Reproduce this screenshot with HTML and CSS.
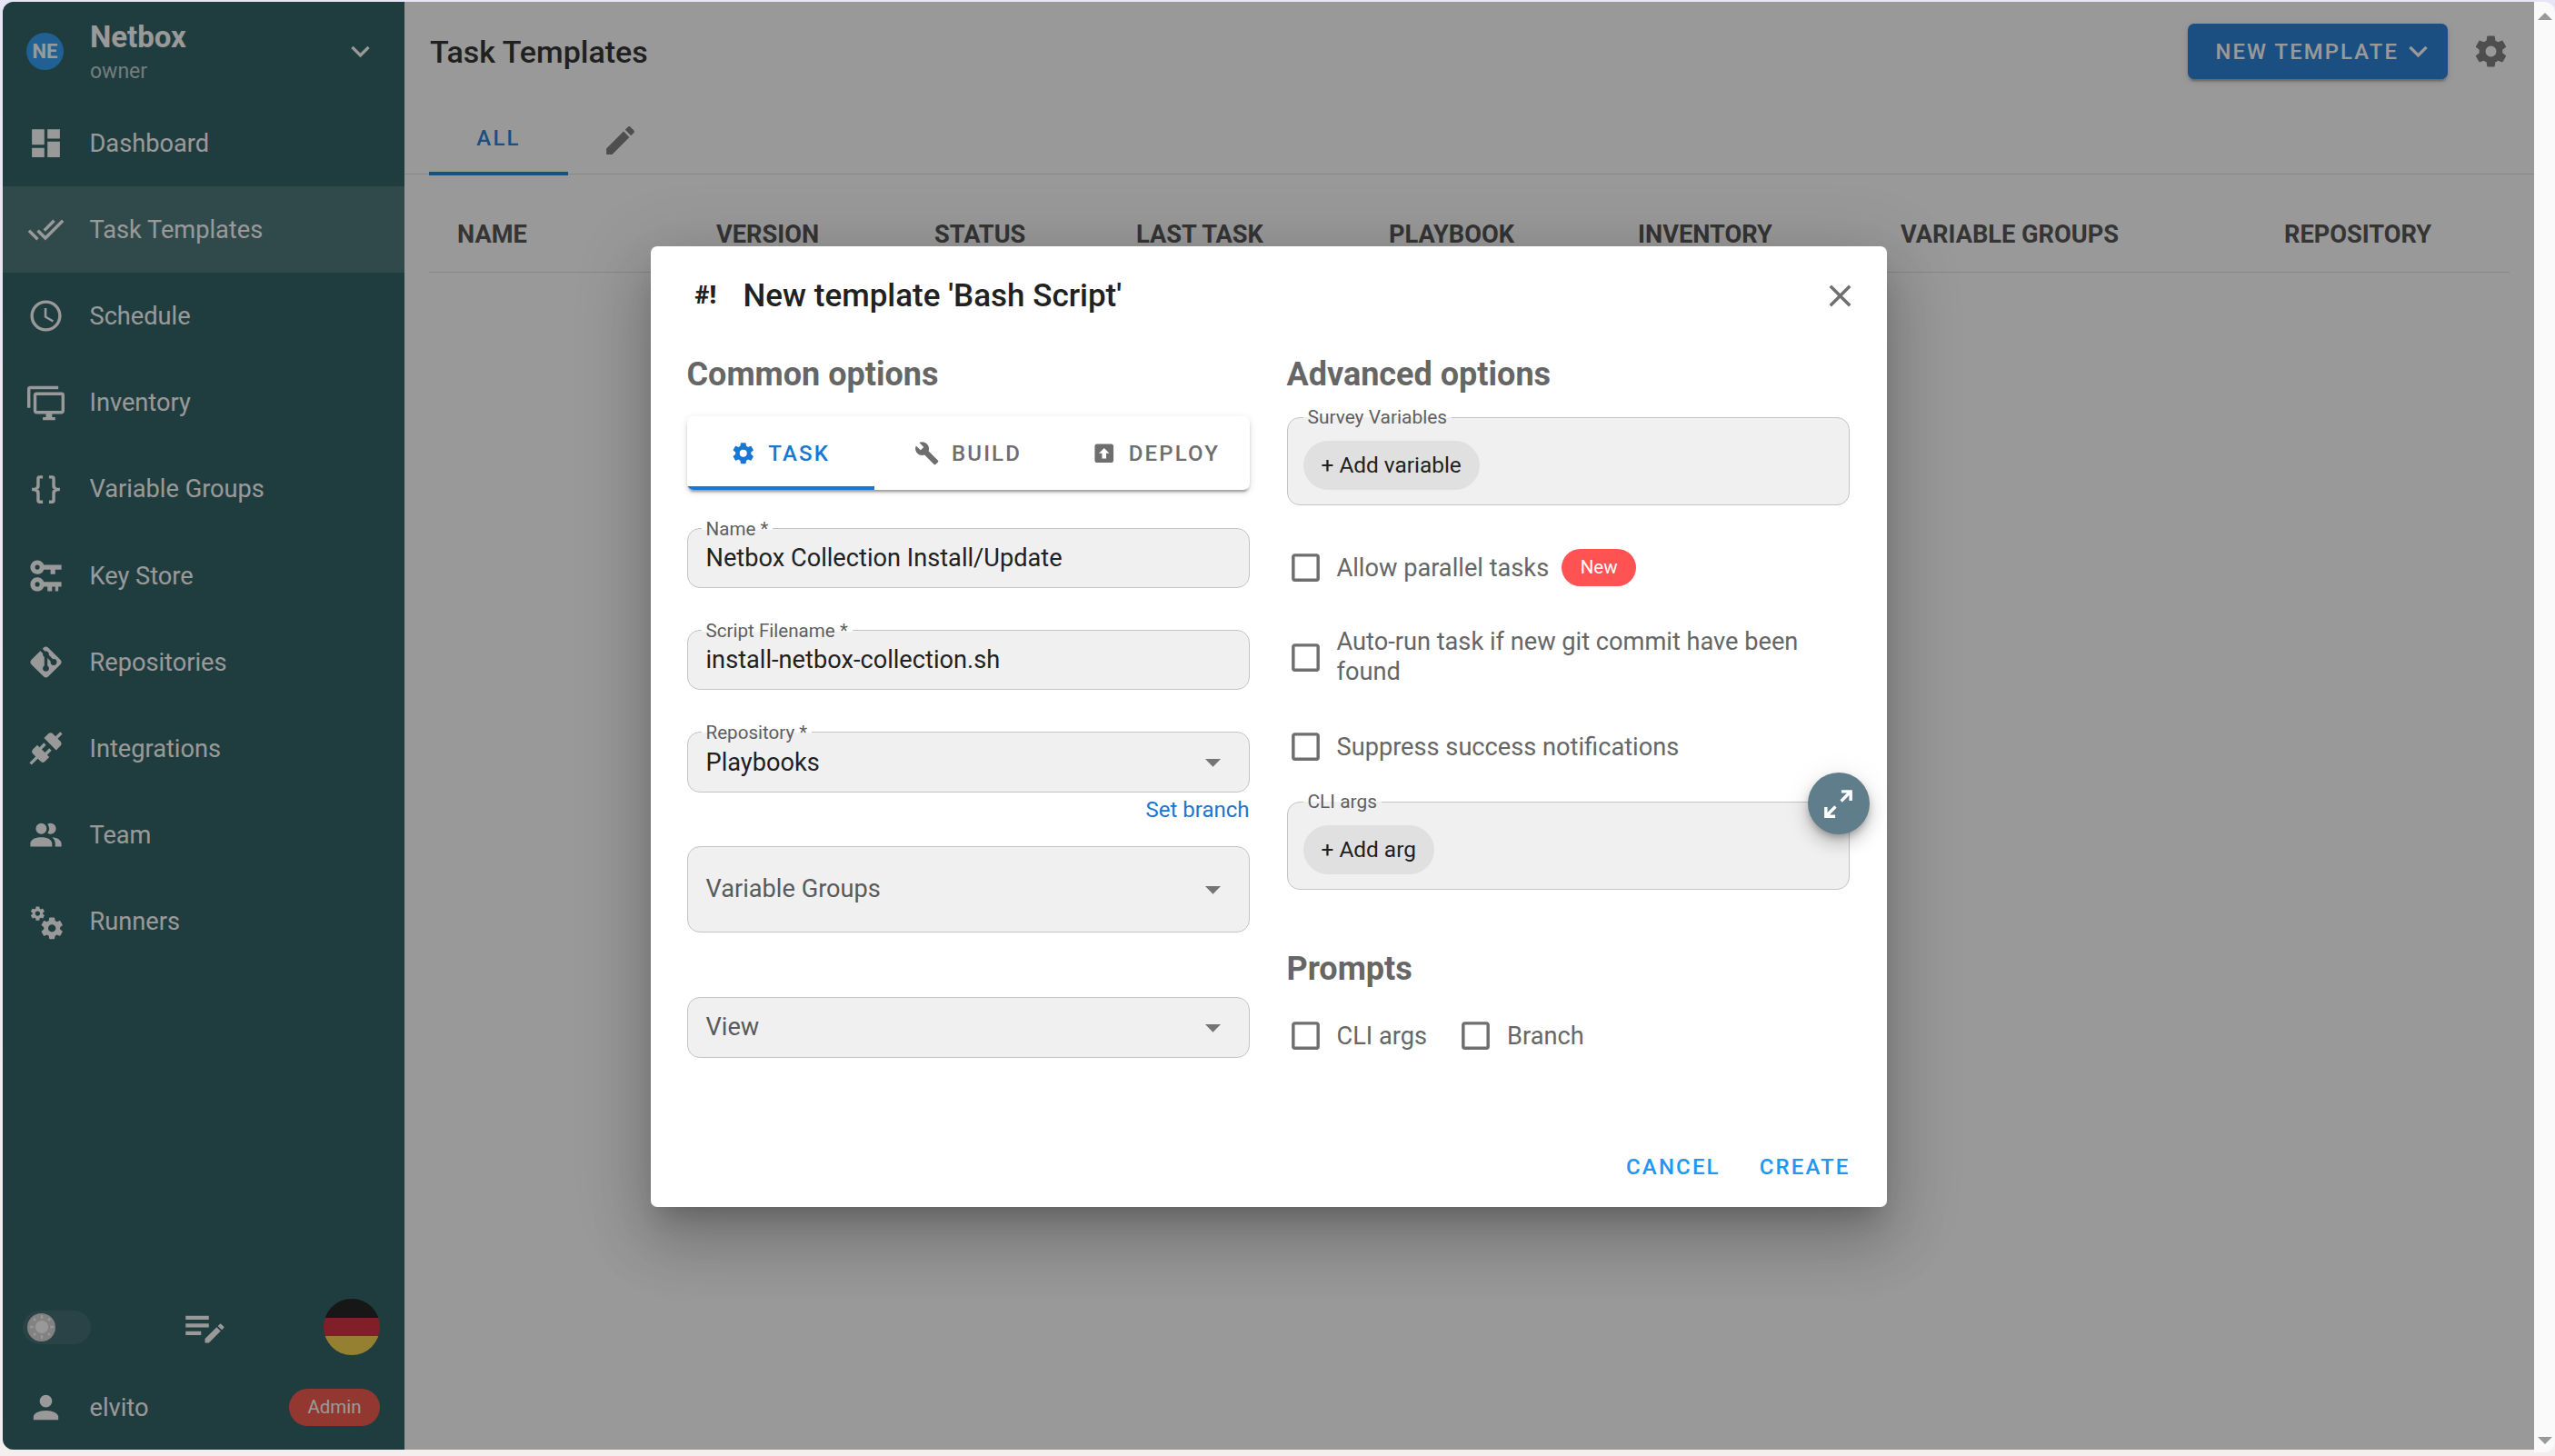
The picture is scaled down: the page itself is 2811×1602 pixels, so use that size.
FILE: index.html
```html
<!doctype html>
<html>
<head>
  <meta charset="utf-8">
  <meta name="viewport" content="width=device-width,initial-scale=1">
  <title>Task Templates</title>
  <link rel="stylesheet" href="styles.css">
</head>
<body>
  <svg class="defs" width="0" height="0">
    <symbol id="i-cog" viewBox="0 0 24 24"><path d="M12,15.5A3.5,3.5 0 0,1 8.5,12A3.5,3.5 0 0,1 12,8.5A3.5,3.5 0 0,1 15.5,12A3.5,3.5 0 0,1 12,15.5M19.43,12.97C19.47,12.65 19.5,12.33 19.5,12C19.5,11.67 19.47,11.34 19.43,11L21.54,9.37C21.73,9.22 21.78,8.95 21.66,8.73L19.66,5.27C19.54,5.05 19.27,4.96 19.05,5.05L16.56,6.05C16.04,5.66 15.5,5.32 14.87,5.07L14.5,2.42C14.46,2.18 14.25,2 14,2H10C9.75,2 9.54,2.18 9.5,2.42L9.13,5.07C8.5,5.32 7.96,5.66 7.44,6.05L4.95,5.05C4.73,4.96 4.46,5.05 4.34,5.27L2.34,8.73C2.21,8.95 2.27,9.22 2.46,9.37L4.57,11C4.53,11.34 4.5,11.67 4.5,12C4.5,12.33 4.53,12.65 4.57,12.97L2.46,14.63C2.27,14.78 2.21,15.05 2.34,15.27L4.34,18.73C4.46,18.95 4.73,19.03 4.95,18.95L7.44,17.94C7.96,18.34 8.5,18.68 9.13,18.93L9.5,21.58C9.54,21.82 9.75,22 10,22H14C14.25,22 14.46,21.82 14.5,21.58L14.87,18.93C15.5,18.67 16.04,18.34 16.56,17.94L19.05,18.95C19.27,19.03 19.54,18.95 19.66,18.73L21.66,15.27C21.78,15.05 21.73,14.78 21.54,14.63L19.43,12.97Z"/></symbol>
    <symbol id="i-chevron" viewBox="0 0 24 24"><path d="M7.41,8.58L12,13.17L16.59,8.58L18,10L12,16L6,10L7.41,8.58Z"/></symbol>
    <symbol id="i-menu-down" viewBox="0 0 24 24"><path d="M7,10L12,15L17,10H7Z"/></symbol>
    <symbol id="i-box" viewBox="0 0 24 24"><path d="M19,3H5C3.89,3 3,3.89 3,5V19A2,2 0 0,0 5,21H19A2,2 0 0,0 21,19V5C21,3.89 20.1,3 19,3M19,5V19H5V5H19Z"/></symbol>
  </svg>

  <div class="app">
    <nav class="sidebar">
      <div class="team">
        <span class="avatar">NE</span>
        <div class="team-text">
          <div class="team-name">Netbox</div>
          <div class="team-role">owner</div>
        </div>
        <svg class="icon team-chevron"><use href="#i-chevron"/></svg>
      </div>

      <a class="nav-item">
        <svg class="icon" viewBox="0 0 24 24"><path d="M13,3V9H21V3M13,21H21V11H13M3,21H11V15H3M3,13H11V3H3V13Z"/></svg>
        <span>Dashboard</span>
      </a>
      <a class="nav-item active">
        <svg class="icon" viewBox="0 0 24 24"><path d="M0.41,13.41L6,19L7.41,17.58L1.83,12M22.24,5.58L11.66,16.17L7.5,12L6.07,13.41L11.66,19L23.66,7M18,7L16.59,5.58L10.24,11.93L11.66,13.34L18,7Z"/></svg>
        <span>Task Templates</span>
      </a>
      <a class="nav-item">
        <svg class="icon" viewBox="0 0 24 24"><path d="M12,20A8,8 0 0,0 20,12A8,8 0 0,0 12,4A8,8 0 0,0 4,12A8,8 0 0,0 12,20M12,2A10,10 0 0,1 22,12A10,10 0 0,1 12,22C6.47,22 2,17.5 2,12A10,10 0 0,1 12,2M12.5,7V12.25L17,14.92L16.25,16.15L11,13V7H12.5Z"/></svg>
        <span>Schedule</span>
      </a>
      <a class="nav-item">
        <svg class="icon" viewBox="0 0 24 24"><path d="M22,17V7H6V17H22M22,5A2,2 0 0,1 24,7V17C24,18.11 23.1,19 22,19H16V21H18V23H10V21H12V19H6C4.89,19 4,18.11 4,17V7A2,2 0 0,1 6,5H22M2,3V15H0V3A2,2 0 0,1 2,1H20V3H2Z"/></svg>
        <span>Inventory</span>
      </a>
      <a class="nav-item">
        <svg class="icon" viewBox="0 0 24 24"><path d="M8,3A2,2 0 0,0 6,5V9A2,2 0 0,1 4,11H3V13H4A2,2 0 0,1 6,15V19A2,2 0 0,0 8,21H10V19H8V14A2,2 0 0,0 6,12A2,2 0 0,0 8,10V5H10V3M16,3A2,2 0 0,1 18,5V9A2,2 0 0,0 20,11H21V13H20A2,2 0 0,0 18,15V19A2,2 0 0,1 16,21H14V19H16V14A2,2 0 0,1 18,12A2,2 0 0,1 16,10V5H14V3H16Z"/></svg>
        <span>Variable Groups</span>
      </a>
      <a class="nav-item">
        <svg class="icon" viewBox="0 0 24 24"><path d="M6.5,2C8.46,2 10.13,3.25 10.74,5H22V8H18V11H15V8H10.74C10.13,9.75 8.46,11 6.5,11C4,11 2,9 2,6.5C2,4 4,2 6.5,2M6.5,5A1.5,1.5 0 0,0 5,6.5A1.5,1.5 0 0,0 6.5,8A1.5,1.5 0 0,0 8,6.5A1.5,1.5 0 0,0 6.5,5M6.5,13C8.46,13 10.13,14.25 10.74,16H22V19H20V22H18V19H16V22H13V19H10.74C10.13,20.75 8.46,22 6.5,22C4,22 2,20 2,17.5C2,15 4,13 6.5,13M6.5,16A1.5,1.5 0 0,0 5,17.5A1.5,1.5 0 0,0 6.5,19A1.5,1.5 0 0,0 8,17.5A1.5,1.5 0 0,0 6.5,16Z"/></svg>
        <span>Key Store</span>
      </a>
      <a class="nav-item">
        <svg class="icon" viewBox="0 0 24 24"><path d="M2.6,10.59L8.38,4.8L10.07,6.5C9.83,7.35 10.22,8.28 11,8.73V14.27C10.4,14.61 10,15.26 10,16A2,2 0 0,0 12,18A2,2 0 0,0 14,16C14,15.26 13.6,14.61 13,14.27V9.41L15.07,11.5C15,11.65 15,11.82 15,12A2,2 0 0,0 17,14A2,2 0 0,0 19,12A2,2 0 0,0 17,10C16.82,10 16.65,10 16.5,10.07L13.93,7.5C14.19,6.57 13.71,5.55 12.78,5.16C12.35,5 11.9,4.96 11.5,5.07L9.8,3.38L10.59,2.6C11.37,1.81 12.63,1.81 13.41,2.6L21.4,10.59C22.19,11.37 22.19,12.63 21.4,13.41L13.41,21.4C12.63,22.19 11.37,22.19 10.59,21.4L2.6,13.41C1.81,12.63 1.81,11.37 2.6,10.59Z"/></svg>
        <span>Repositories</span>
      </a>
      <a class="nav-item">
        <svg class="icon" viewBox="0 0 24 24"><path d="M21.4 7.5C22.2 8.3 22.2 9.6 21.4 10.3L18.6 13.1L10.8 5.3L13.6 2.5C14.4 1.7 15.7 1.7 16.4 2.5L18.2 4.3L21.2 1.3L22.6 2.7L19.6 5.7L21.4 7.5M15.6 13.3L14.2 11.9L11.4 14.7L9.3 12.6L12.1 9.8L10.7 8.4L7.9 11.2L6.4 9.8L3.6 12.6C2.8 13.4 2.8 14.7 3.6 15.4L5.4 17.2L1.4 21.2L2.8 22.6L6.8 18.6L8.6 20.4C9.4 21.2 10.7 21.2 11.4 20.4L14.2 17.6L12.8 16.2L15.6 13.3Z"/></svg>
        <span>Integrations</span>
      </a>
      <a class="nav-item">
        <svg class="icon" viewBox="0 0 24 24"><path d="M16 17V19H2V17S2 13 9 13 16 17 16 17M12.5 7.5A3.5 3.5 0 1 0 9 11A3.5 3.5 0 0 0 12.5 7.5M15.94 13A5.32 5.32 0 0 1 18 17V19H22V17S22 13.37 15.94 13M15 4A3.39 3.39 0 0 0 13.07 4.59A5 5 0 0 1 13.07 10.41A3.39 3.39 0 0 0 15 11A3.5 3.5 0 0 0 15 4Z"/></svg>
        <span>Team</span>
      </a>
      <a class="nav-item">
        <svg class="icon" viewBox="0 0 24 24"><path d="M15.9,18.45C17.25,18.45 18.35,17.35 18.35,16C18.35,14.65 17.25,13.55 15.9,13.55C14.54,13.55 13.45,14.65 13.45,16C13.45,17.35 14.54,18.45 15.9,18.45M21.1,16.68L22.58,17.84C22.71,17.95 22.75,18.13 22.66,18.29L21.26,20.71C21.17,20.86 21,20.92 20.83,20.86L19.09,20.16C18.73,20.44 18.33,20.67 17.91,20.85L17.64,22.7C17.62,22.87 17.47,23 17.3,23H14.5C14.32,23 14.18,22.87 14.15,22.7L13.89,20.85C13.46,20.67 13.07,20.44 12.71,20.16L10.96,20.86C10.81,20.92 10.62,20.86 10.54,20.71L9.14,18.29C9.05,18.13 9.09,17.95 9.22,17.84L10.7,16.68L10.65,16L10.7,15.31L9.22,14.16C9.09,14.05 9.05,13.86 9.14,13.71L10.54,11.29C10.62,11.13 10.81,11.07 10.96,11.13L12.71,11.84C13.07,11.56 13.46,11.32 13.89,11.15L14.15,9.29C14.18,9.13 14.32,9 14.5,9H17.3C17.47,9 17.62,9.13 17.64,9.29L17.91,11.15C18.33,11.32 18.73,11.56 19.09,11.84L20.83,11.13C21,11.07 21.17,11.13 21.26,11.29L22.66,13.71C22.75,13.86 22.71,14.05 22.58,14.16L21.1,15.31L21.15,16L21.1,16.68M6.69,8.07C7.56,8.07 8.26,7.37 8.26,6.5C8.26,5.63 7.56,4.92 6.69,4.92A1.58,1.58 0 0,0 5.11,6.5C5.11,7.37 5.82,8.07 6.69,8.07M10.03,6.94L11,7.68C11.07,7.75 11.09,7.87 11.03,7.97L10.13,9.53C10.08,9.63 9.96,9.67 9.85,9.63L8.74,9.18L8,9.62L7.81,10.81C7.79,10.92 7.7,11 7.59,11H5.79C5.67,11 5.58,10.92 5.56,10.81L5.4,9.62L4.64,9.18L3.5,9.63C3.41,9.67 3.3,9.63 3.24,9.53L2.34,7.97C2.28,7.87 2.31,7.75 2.39,7.68L3.34,6.94L3.31,6.5L3.34,6.06L2.39,5.32C2.31,5.25 2.28,5.13 2.34,5.03L3.24,3.47C3.3,3.37 3.41,3.33 3.5,3.37L4.63,3.82L5.4,3.38L5.56,2.19C5.58,2.08 5.67,2 5.79,2H7.59C7.7,2 7.79,2.08 7.81,2.19L8,3.38L8.74,3.82L9.85,3.37C9.96,3.33 10.08,3.37 10.13,3.47L11.03,5.03C11.09,5.13 11.07,5.25 11,5.32L10.03,6.06L10.06,6.5L10.03,6.94Z"/></svg>
        <span>Runners</span>
      </a>

      <div class="side-controls">
        <div class="toggle">
          <span class="toggle-thumb">
            <svg viewBox="0 0 24 24"><path d="M3.55 19.09L4.96 20.5L6.76 18.71L5.34 17.29M12 6C8.69 6 6 8.69 6 12S8.69 18 12 18 18 15.31 18 12C18 8.68 15.31 6 12 6M20 13H23V11H20M17.24 18.71L19.04 20.5L20.45 19.09L18.66 17.29M20.45 5L19.04 3.5L17.24 5.29L18.66 6.71M13 1H11V4H13M6.76 5.29L4.96 3.5L3.55 5L5.34 6.71L6.76 5.29M1 13H4V11H1M13 20H11V23H13"/></svg>
          </span>
        </div>
        <svg class="icon-edit" viewBox="0 0 24 24"><path d="M2,6V8H14V6H2M2,10V12H14V10H2M20.04,10.13C19.9,10.13 19.76,10.19 19.65,10.3L18.65,11.3L20.7,13.35L21.7,12.35C21.92,12.14 21.92,11.79 21.7,11.58L20.42,10.3C20.31,10.19 20.18,10.13 20.04,10.13M18.07,11.88L12,17.94V20H14.06L20.12,13.93L18.07,11.88M2,14V16H10V14H2Z"/></svg>
        <div class="flag"><i class="flag-black"></i><i class="flag-red"></i><i class="flag-gold"></i></div>
      </div>
      <div class="side-user">
        <svg class="icon" viewBox="0 0 24 24"><path d="M12,4A4,4 0 0,1 16,8A4,4 0 0,1 12,12A4,4 0 0,1 8,8A4,4 0 0,1 12,4M12,14C16.42,14 20,15.79 20,18V20H4V18C4,15.79 7.58,14 12,14Z"/></svg>
        <span>elvito</span>
        <span class="admin-chip">Admin</span>
      </div>
    </nav>

    <main class="main">
      <header class="toolbar">
        <h1>Task Templates</h1>
        <button class="btn-new">NEW TEMPLATE <svg><use href="#i-chevron"/></svg></button>
        <svg class="icon toolbar-gear"><use href="#i-cog"/></svg>
      </header>
      <div class="page-tabs">
        <div class="page-tab">ALL</div>
        <svg class="icon page-pencil" viewBox="0 0 24 24"><path d="M20.71,7.04C21.1,6.65 21.1,6 20.71,5.63L18.37,3.29C18,2.9 17.35,2.9 16.96,3.29L15.12,5.12L18.87,8.87M3,17.25V21H6.75L17.81,9.93L14.06,6.18L3,17.25Z"/></svg>
      </div>
      <div class="table-head">
        <div>NAME</div>
        <div>VERSION</div>
        <div>STATUS</div>
        <div>LAST TASK</div>
        <div>PLAYBOOK</div>
        <div>INVENTORY</div>
        <div>VARIABLE GROUPS</div>
        <div>REPOSITORY</div>
      </div>
    </main>

    <div class="scrollbar">
      <span class="arrow-up"></span>
      <span class="arrow-down"></span>
    </div>

    <div class="overlay">
      <div class="scrim"></div>
      <section class="dialog">
        <div class="dialog-title">
          <span class="shebang">#!</span>
          <span class="dialog-name">New template 'Bash Script'</span>
          <svg class="icon dialog-close" viewBox="0 0 24 24"><path d="M19,6.41L17.59,5L12,10.59L6.41,5L5,6.41L10.59,12L5,17.59L6.41,19L12,13.41L17.59,19L19,17.59L13.41,12L19,6.41Z"/></svg>
        </div>

        <div class="dialog-body">
          <div class="col">
            <h3>Common options</h3>
            <div class="form-tabs">
              <div class="form-tab active">
                <svg><use href="#i-cog"/></svg><span>TASK</span>
              </div>
              <div class="form-tab">
                <svg viewBox="0 0 24 24"><path d="M22.7,19L13.6,9.9C14.5,7.6 14,4.9 12.1,3C10.1,1 7.1,0.6 4.7,1.7L9,6L6,9L1.6,4.7C0.4,7.1 0.9,10.1 2.9,12.1C4.8,14 7.5,14.5 9.8,13.6L18.9,22.7C19.3,23.1 19.9,23.1 20.3,22.7L22.6,20.4C23.1,20 23.1,19.3 22.7,19Z"/></svg><span>BUILD</span>
              </div>
              <div class="form-tab">
                <svg viewBox="0 0 24 24"><path d="M19,3H5C3.89,3 3,3.89 3,5V19A2,2 0 0,0 5,21H19A2,2 0 0,0 21,19V5C21,3.89 20.1,3 19,3M12,7L17,12H14V17H10V12H7L12,7Z"/></svg><span>DEPLOY</span>
              </div>
            </div>

            <div class="field field-name">
              <label>Name *</label>
              <span class="value">Netbox Collection Install/Update</span>
            </div>
            <div class="field field-script">
              <label>Script Filename *</label>
              <span class="value">install-netbox-collection.sh</span>
            </div>
            <div class="field field-repo">
              <label>Repository *</label>
              <span class="value">Playbooks</span>
              <svg class="caret"><use href="#i-menu-down"/></svg>
            </div>
            <a class="set-branch">Set branch</a>
            <div class="field field-groups">
              <span class="placeholder">Variable Groups</span>
              <svg class="caret"><use href="#i-menu-down"/></svg>
            </div>
            <div class="field field-view">
              <span class="placeholder">View</span>
              <svg class="caret"><use href="#i-menu-down"/></svg>
            </div>
          </div>

          <div class="col">
            <h3>Advanced options</h3>
            <div class="field field-chips field-survey">
              <label>Survey Variables</label>
              <span class="chip">+ Add variable</span>
            </div>

            <div class="check check-parallel">
              <svg class="icon"><use href="#i-box"/></svg>
              <span>Allow parallel tasks</span>
              <span class="new-chip">New</span>
            </div>
            <div class="check check-autorun">
              <svg class="icon"><use href="#i-box"/></svg>
              <span>Auto-run task if new git commit have been found</span>
            </div>
            <div class="check check-suppress">
              <svg class="icon"><use href="#i-box"/></svg>
              <span>Suppress success notifications</span>
            </div>

            <div class="field field-chips field-cli">
              <label>CLI args</label>
              <span class="chip">+ Add arg</span>
              <span class="fab">
                <svg viewBox="0 0 24 24"><path d="M10,21V19H6.41L10.91,14.5L9.5,13.09L5,17.59V14H3V21H10M14.5,10.91L19,6.41V10H21V3H14V5H17.59L13.09,9.5L14.5,10.91Z"/></svg>
              </span>
            </div>

            <h3 class="prompts-title">Prompts</h3>
            <div class="prompts">
              <div class="check">
                <svg class="icon"><use href="#i-box"/></svg>
                <span>CLI args</span>
              </div>
              <div class="check">
                <svg class="icon"><use href="#i-box"/></svg>
                <span>Branch</span>
              </div>
            </div>
          </div>
        </div>

        <div class="dialog-actions">
          <a>CANCEL</a>
          <a>CREATE</a>
        </div>
      </section>
    </div>
  </div>
</body>
</html>
```

FILE: styles.css
```css
* {
  box-sizing: border-box;
}

body {
  margin: 0;
  height: 1602px;
  overflow: hidden;
  font-family: Roboto, "Liberation Sans", sans-serif;
  font-size: 27.2px;
  color: #212121;
  background: linear-gradient(180deg, #e8e6f6, #f5eeef);
}

.defs {
  position: absolute;
}

.icon {
  flex: none;
  width: 41px;
  height: 41px;
  fill: currentColor;
}

.app {
  position: relative;
  display: flex;
  height: 1593px;
  margin: 2px 0 0 3px;
}

/* sidebar */
.sidebar {
  flex: none;
  display: flex;
  flex-direction: column;
  width: 442px;
  background: #1f5459;
  color: #fff;
  border-radius: 12px 0 0 12px;
}

.team {
  display: flex;
  align-items: center;
  height: 108px;
  padding: 0 28px 0 26px;
}

.avatar {
  flex: none;
  width: 41px;
  height: 41px;
  border-radius: 50%;
  background: #2196f3;
  font-size: 22px;
  font-weight: 700;
  line-height: 41px;
  text-align: center;
}

.team-text {
  flex: 1;
  margin-left: 29px;
}

.team-name {
  font-size: 33px;
  font-weight: 700;
  line-height: 40px;
  margin-top: 2px;
}

.team-role {
  margin-top: 4px;
  font-size: 23px;
  line-height: 28px;
  color: rgba(255, 255, 255, .7);
}

.nav-item {
  flex: none;
  display: flex;
  align-items: center;
  gap: 27.5px;
  height: 95.2px;
  padding-left: 27px;
}

.nav-item.active {
  background: rgba(255, 255, 255, .14);
}

.side-controls {
  flex: none;
  display: flex;
  align-items: center;
  justify-content: space-between;
  height: 80px;
  margin-top: auto;
  padding: 0 27px 0 22px;
}

.toggle {
  width: 75px;
  height: 37px;
  border-radius: 19px;
  background: rgba(255, 255, 255, .08);
}

.toggle-thumb {
  display: block;
  width: 31px;
  height: 31px;
  margin: 3px 0 0 5px;
  padding: 1.5px;
  border-radius: 50%;
  background: #d4d4d4;
}

.toggle-thumb svg {
  display: block;
  width: 28px;
  height: 28px;
  fill: #fff;
}

.icon-edit {
  width: 51px;
  height: 51px;
  margin-right: 6px;
  fill: #fff;
}

.flag {
  width: 62px;
  height: 62px;
  border-radius: 50%;
  overflow: hidden;
}

.flag i {
  display: block;
  height: 33.34%;
}

.flag-black {
  background: #0f0f0f;
}

.flag-red {
  background: #cf1f2e;
}

.flag-gold {
  background: #f8d142;
}

.side-user {
  flex: none;
  display: flex;
  align-items: center;
  gap: 27.5px;
  height: 95px;
  padding: 2px 27px 0 27px;
}

.admin-chip {
  margin-left: auto;
  width: 100px;
  height: 41px;
  border-radius: 21px;
  background: #f44c3d;
  font-size: 20.5px;
  line-height: 41px;
  text-align: center;
}

/* page behind the dialog */
.main {
  flex: 1;
  min-width: 0;
  background: #fff;
}

.toolbar {
  display: flex;
  align-items: center;
  height: 107px;
  padding: 2px 27px 0 28px;
}

.toolbar h1 {
  flex: 1;
  margin: 0;
  font-size: 34px;
  font-weight: 500;
}

.btn-new {
  display: flex;
  align-items: center;
  height: 61px;
  padding: 0 12px 0 30px;
  border: 0;
  border-radius: 7px;
  background: #1976d2;
  color: #fff;
  font-family: inherit;
  font-size: 23.8px;
  font-weight: 500;
  letter-spacing: 2.14px;
  box-shadow: 0 5px 2px -3px rgba(0, 0, 0, .2), 0 3px 3px rgba(0, 0, 0, .14), 0 2px 8px rgba(0, 0, 0, .12);
}

.btn-new svg {
  width: 41px;
  height: 41px;
  margin-left: 1px;
  fill: #fff;
}

.toolbar-gear {
  margin-left: 27px;
  color: #757575;
}

.page-tabs {
  display: flex;
  align-items: center;
  height: 83px;
  padding-left: 27px;
  border-bottom: 1px solid #e0e0e0;
}

.page-tab {
  width: 153px;
  height: 83px;
  border-bottom: 4px solid #1976d2;
  margin-top: 3px;
  color: #1976d2;
  font-size: 24px;
  font-weight: 500;
  letter-spacing: 2.14px;
  line-height: 84px;
  text-align: center;
}

.page-pencil {
  margin-left: 37px;
  margin-top: 8px;
  color: #757575;
}

.table-head {
  display: grid;
  grid-template-columns: 285px 240px 222px 278px 274px 289px 422px 279px;
  align-items: center;
  height: 108px;
  margin: 0 27px 0 27px;
  padding-top: 25px;
  border-bottom: 1px solid #e0e0e0;
  color: #464646;
  font-weight: 700;
}

.table-head div {
  padding-left: 31px;
}

.scrollbar {
  flex: none;
  display: flex;
  flex-direction: column;
  justify-content: space-between;
  align-items: center;
  width: 23px;
  height: 1596px;
  padding: 12px 0 9px;
  background: #fafafa;
  border-radius: 0 12px 12px 0;
}

.arrow-up,
.arrow-down {
  width: 0;
  height: 0;
  border-left: 8px solid transparent;
  border-right: 8px solid transparent;
}

.arrow-up {
  border-bottom: 8px solid #999;
}

.arrow-down {
  border-top: 8px solid #999;
}

/* dialog */
.overlay {
  position: absolute;
  top: 0;
  left: 0;
  width: 2785px;
  height: 1593px;
  display: flex;
  align-items: center;
  justify-content: center;
}

.scrim {
  position: absolute;
  inset: 0;
  background: rgba(33, 33, 33, .46);
  border-radius: 12px 0 0 12px;
}

.dialog {
  position: relative;
  display: flex;
  flex-direction: column;
  width: 1360px;
  height: 1057px;
  margin-top: 2px;
  background: #fff;
  border-radius: 7px;
  box-shadow: 0 19px 26px -12px rgba(0, 0, 0, .2), 0 41px 65px 5px rgba(0, 0, 0, .14), 0 15px 79px 14px rgba(0, 0, 0, .12);
}

.dialog-title {
  flex: none;
  display: flex;
  align-items: center;
  height: 108px;
  padding: 0 31px 0 49px;
}

.shebang {
  width: 53px;
  font-size: 27.4px;
  font-weight: 900;
}

.dialog-name {
  flex: 1;
  font-size: 35px;
  font-weight: 500;
}

.dialog-close {
  color: #707070;
}

.dialog-body {
  flex: 1;
  display: flex;
  gap: 41px;
  padding: 0 41px 0 40px;
}

.col {
  flex: 1;
  min-width: 0;
}

.col h3 {
  margin: 0;
  height: 66px;
  color: #666;
  font-size: 36px;
  font-weight: 700;
  line-height: 66px;
}

.form-tabs {
  display: flex;
  height: 81px;
  margin-top: 13px;
  border-radius: 7px;
  box-shadow: 0 5px 2px -3px rgba(0, 0, 0, .2), 0 3px 3px rgba(0, 0, 0, .14), 0 2px 8px rgba(0, 0, 0, .12);
  overflow: hidden;
}

.form-tab {
  flex: 1;
  display: flex;
  align-items: center;
  justify-content: center;
  gap: 13.5px;
  color: #6e6e6e;
  fill: #6e6e6e;
  font-size: 24px;
  font-weight: 500;
  letter-spacing: 2.14px;
}

.form-tab svg {
  width: 27.5px;
  height: 27.5px;
}

.form-tab.active {
  color: #1976d2;
  fill: #1976d2;
  box-shadow: inset 0 -4px 0 #1976d2;
}

.field {
  position: relative;
  display: flex;
  align-items: center;
  padding: 0 20px;
  background: #f0f0f0;
  border: 1px solid #c4c4c4;
  border-radius: 14px;
}

.field label {
  position: absolute;
  top: -12px;
  left: 15px;
  padding: 0 5px;
  background: linear-gradient(180deg, #fff 50%, #f0f0f0 50%);
  color: #5f5f5f;
  font-size: 20.6px;
  line-height: 25px;
}

.placeholder {
  margin-bottom: 1px;
  color: #5a5a5a;
}

.caret {
  margin-left: auto;
  margin-right: -1px;
  width: 41px;
  height: 41px;
  fill: #757575;
}

.field-name {
  height: 66px;
  margin-top: 42px;
}

.field-script {
  height: 66px;
  margin-top: 46px;
}

.field-repo {
  height: 67px;
  margin-top: 46px;
}

.set-branch {
  display: block;
  height: 34px;
  margin-top: 2px;
  color: #1976d2;
  font-size: 24px;
  line-height: 34px;
  text-align: right;
}

.field-groups {
  height: 95px;
  margin-top: 23px;
}

.field-view {
  height: 67px;
  margin-top: 71px;
}

.field-chips {
  padding: 8px 17px 0;
}

.field-chips label {
  left: 17px;
  top: -13px;
  font-size: 20.9px;
}

.chip {
  display: block;
  height: 54px;
  padding: 0 20px;
  border-radius: 27px;
  background: #e0e0e0;
  color: #212121;
  font-size: 24.4px;
  line-height: 54px;
}

.field-survey {
  height: 97px;
  margin-top: 14px;
}

.field-cli {
  height: 97px;
  margin-top: 40px;
}

.fab {
  position: absolute;
  top: -33px;
  right: -23px;
  display: flex;
  align-items: center;
  justify-content: center;
  width: 68px;
  height: 68px;
  border-radius: 50%;
  background: #607d8b;
  box-shadow: 0 5px 9px -2px rgba(0, 0, 0, .3), 0 10px 17px 2px rgba(0, 0, 0, .14), 0 3px 31px 5px rgba(0, 0, 0, .05);
}

.fab svg {
  width: 41px;
  height: 41px;
  fill: #fff;
}

.check {
  display: flex;
  align-items: center;
  gap: 14px;
  color: #666;
}

.check .icon {
  color: #6e6e6e;
}

.check-parallel {
  height: 41px;
  margin-top: 48px;
}

.check-autorun {
  height: 66px;
  margin-top: 45px;
  line-height: 33px;
}

.check-autorun span {
  width: 560px;
}

.check-suppress {
  height: 41px;
  margin-top: 45px;
}

.new-chip {
  width: 82px;
  height: 41px;
  border-radius: 21px;
  background: #ff5252;
  color: #fff;
  font-size: 20.5px;
  line-height: 41px;
  text-align: center;
}

.col .prompts-title {
  margin-top: 54px;
}

.prompts {
  display: flex;
  gap: 33px;
  margin-top: 20px;
  height: 41px;
}

.dialog-actions {
  flex: none;
  display: flex;
  justify-content: flex-end;
  gap: 43px;
  height: 89px;
  padding: 0 40px 0 0;
  color: #2196f3;
  font-size: 24px;
  font-weight: 500;
  letter-spacing: 2.14px;
  line-height: 90px;
}
```
